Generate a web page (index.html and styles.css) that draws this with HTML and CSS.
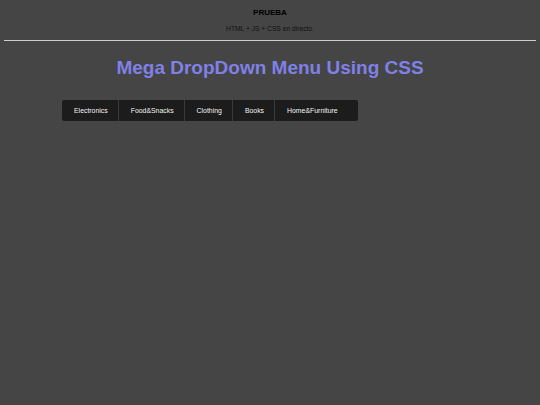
FILE: index.html
```html
<!DOCTYPE html>
<html>
<head>
<meta charset="utf-8">
<link rel="stylesheet" href="styles.css">
</head>
<body>
<header class="top">
  <div class="brand">PRUEBA</div>
  <div class="sub">HTML + JS + CSS en directo.</div>
</header>
<hr class="rule">
<h1 class="title">Mega DropDown Menu Using CSS</h1>
<nav class="menu">
  <a class="item">Electronics</a>
  <a class="item">Food&amp;Snacks</a>
  <a class="item">Clothing</a>
  <a class="item">Books</a>
  <a class="item last">Home&amp;Furniture</a>
</nav>
</body>
</html>
```
FILE: styles.css
```css
html, body {
  background: #454545;
}
body {
  margin: 4px;
  font-family: "Liberation Sans", Arial, sans-serif;
  color: #000;
}
.top {
  text-align: center;
  padding-top: 1px;
}
.brand {
  font-weight: bold;
  font-size: 8px;
  line-height: 16px;
}
.sub {
  font-size: 6.7px;
  line-height: 16px;
  color: #111;
}
.rule {
  margin: 3px 0 0 0;
  border: 0;
  border-top: 1px solid #cfcfcf;
  height: 0;
}
.title {
  margin: 15px 0 0 0;
  text-align: center;
  font-size: 19px;
  line-height: 24px;
  color: #8080e6;
}
.menu {
  display: flex;
  width: max-content;
  margin: 20px 0 0 58px;
  background: #1c1c1c;
  border-radius: 2px;
  height: 21px;
}
.item {
  display: flex;
  align-items: center;
  padding: 0 10px 0 12px;
  font-size: 6.9px;
  color: #f2f2f2;
  border-right: 1px solid #3a3a3a;
}
.item.last {
  border-right: 0;
  padding-right: 20px;
}
```
